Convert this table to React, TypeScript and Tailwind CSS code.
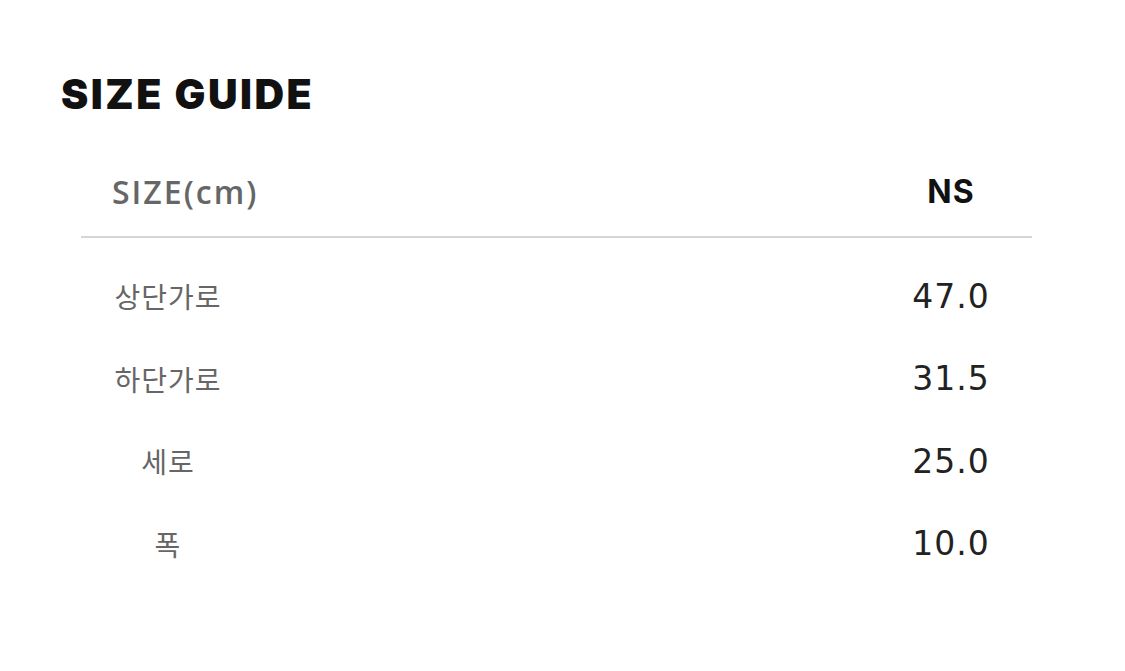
import React from "react";

const rows = [
  { label: "상단가로", value: "47.0" },
  { label: "하단가로", value: "31.5" },
  { label: "세로", value: "25.0" },
  { label: "폭", value: "10.0" },
];

const App = () => {
  return (
    <div className="w-[1125px] h-[671px] bg-white font-['Noto_Sans','Noto_Sans_CJK_KR',sans-serif]">
      <div className="pt-[74px] pl-[61px]">
        <h1 className="font-['Inter',sans-serif] font-black text-[41px] leading-none tracking-[2.5px] text-[#111]">
          SIZE GUIDE
        </h1>
      </div>

      <div className="mt-[46px] ml-[81px] w-[951px]">
        {/* header */}
        <div className="flex items-center h-[77px] border-b-2 border-[#d6d6d6]">
          <div className="w-[810px] pl-[31px] pb-[13px] font-['Open_Sans',sans-serif] font-semibold text-[32px] text-[#666] tracking-[2px]">
            SIZE(cm)
          </div>
          <div className="w-[120px] pb-[13px] text-center font-['Inter',sans-serif] font-bold text-[32px] tracking-[1px] text-[#111]">
            NS
          </div>
        </div>

        {/* rows */}
        <div className="pt-[17px]">
          {rows.map((row) => (
            <div key={row.label} className="flex items-center h-[82.5px]">
              <div className="w-[174px] text-center font-['Noto_Sans_CJK_KR',sans-serif] text-[28px] tracking-[1px] text-[#666]">
                {row.label}
              </div>
              <div className="w-[636px]" />
              <div className="w-[120px] text-center font-['DejaVu_Sans',sans-serif] text-[33px] tracking-[1px] text-[#222]">
                {row.value}
              </div>
            </div>
          ))}
        </div>
      </div>
    </div>
  );
};

export default App;
